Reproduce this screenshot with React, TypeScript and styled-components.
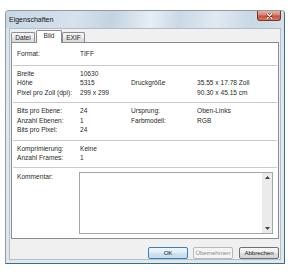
import React from "react"
import styled, { createGlobalStyle } from "styled-components"

const GlobalStyle = createGlobalStyle`
	html, body {
		margin: 0;
		padding: 0;
		background: #ffffff;
	}
	body {
		width: 300px;
		height: 274px;
		overflow: hidden;
		font-family: "Liberation Sans", Arial, sans-serif;
		color: #2a2a2a;
	}
`

const Page = styled.div`
	padding: 10px 0 0 5px;
`

const Window = styled.div`
	box-sizing: border-box;
	width: 280px;
	height: 254px;
	border: 1px solid #8d9ba6;
	border-right-color: #3e6f88;
	border-bottom-color: #3e6f88;
	border-radius: 4px 4px 0 0;
	background: linear-gradient(180deg, #d6e2eb 0%, #e2eaf0 40%, #dfe7ed 100%);
	display: flex;
	flex-direction: column;
`

const TitleBar = styled.div`
	height: 17px;
	display: flex;
	justify-content: space-between;
	align-items: center;
	padding-left: 3px;
	background: linear-gradient(
		100deg,
		#c7d7e4 0%,
		#d6e2ec 25%,
		#c3d3e0 38%,
		#e6eef4 52%,
		#cad9e5 62%,
		#e0e9f0 75%,
		#c9d8e4 88%,
		#d5e1ea 100%
	);
	border-radius: 3px 3px 0 0;
`

const Title = styled.span`
	font-size: 7px;
	color: #111;
`

const CloseButton = styled.div`
	align-self: flex-start;
	width: 24px;
	height: 10px;
	margin-right: 3px;
	box-sizing: border-box;
	border: 1px solid #7a3428;
	border-top: none;
	border-radius: 0 0 3px 3px;
	background: linear-gradient(180deg, #eab0a2 0%, #dc8170 45%, #c94d3a 55%, #d77a5e 100%);
	display: flex;
	align-items: center;
	justify-content: center;
`

const Client = styled.div`
	flex: 1;
	margin: 0 3px 3px;
	border: 1px solid #b3bec6;
	background: #f0f0f0;
	padding: 1px 1px 0;
	display: flex;
	flex-direction: column;
`

const TabStrip = styled.div`
	height: 13px;
	margin-bottom: -1px;
	display: flex;
	align-items: flex-end;
	position: relative;
	z-index: 1;
`

const Tab = styled.div<{ $active?: boolean; $width: number; $gap?: number }>`
	box-sizing: border-box;
	width: ${(p) => p.$width}px;
	height: ${(p) => (p.$active ? 13 : 10)}px;
	margin-bottom: ${(p) => (p.$active ? 0 : 1)}px;
	margin-left: ${(p) => p.$gap ?? 0}px;
	border: 1px solid #898c95;
	border-bottom: none;
	border-radius: 2px 2px 0 0;
	background: ${(p) =>
		p.$active
			? "#ffffff"
			: "linear-gradient(180deg, #f4f4f4 0%, #ececec 50%, #e2e2e2 51%, #dadada 100%)"};
	font-size: 6.6px;
	line-height: 9px;
	text-align: center;
`

const Panel = styled.div`
	box-sizing: border-box;
	height: 197px;
	border: 1px solid #898c95;
	background: #ffffff;
	display: flex;
	flex-direction: column;
`

const Section = styled.div<{ $pt: number; $pb: number }>`
	margin: 0 1px;
	padding: ${(p) => p.$pt}px 0 ${(p) => p.$pb}px 4px;
	border-bottom: 1px solid #cacaca;
	display: grid;
	grid-template-columns: 63px 51px 66px 1fr;
	grid-auto-rows: 9.5px;
	font-size: 6.6px;
	line-height: 9.5px;
	white-space: nowrap;
`

const CommentSection = styled.div`
	flex: 1;
	margin: 0 1px;
	padding: 4.5px 4px 0 4px;
	display: flex;
	font-size: 6.6px;
	line-height: 9.5px;
`

const CommentLabel = styled.div`
	width: 62px;
`

const TextBox = styled.div`
	box-sizing: border-box;
	width: 194px;
	height: 62px;
	border: 1px solid #a4a6ab;
	background: #ffffff;
	display: flex;
	justify-content: flex-end;
`

const ScrollBar = styled.div`
	width: 10px;
	background: #ebebeb;
	display: flex;
	flex-direction: column;
	justify-content: space-between;
	align-items: center;
	padding: 3px 0;
`

const Arrow = ({ down }: { down?: boolean }) => (
	<svg width="5" height="3" viewBox="0 0 5 3">
		<path d={down ? "M0 0 L5 0 L2.5 3 Z" : "M0 3 L5 3 L2.5 0 Z"} fill="#404040" />
	</svg>
)

const ButtonRow = styled.div`
	margin-top: 8px;
	display: flex;
	justify-content: flex-end;
`

const Button = styled.div<{ $kind?: "default" | "disabled"; $gap?: number }>`
	box-sizing: border-box;
	width: 40px;
	height: 12px;
	margin-left: ${(p) => p.$gap ?? 0}px;
	border: 1px solid
		${(p) =>
			p.$kind === "default" ? "#3c7fb1" : p.$kind === "disabled" ? "#b5b9bc" : "#707070"};
	border-radius: 2px;
	background: ${(p) =>
		p.$kind === "default"
			? "linear-gradient(180deg, #eef6fb 0%, #e0eef7 45%, #cfe4f2 50%, #c3dcee 100%)"
			: p.$kind === "disabled"
				? "#f4f4f4"
				: "linear-gradient(180deg, #f6f6f6 0%, #ededed 45%, #dedede 50%, #d3d3d3 100%)"};
	color: ${(p) => (p.$kind === "disabled" ? "#8c8c8c" : "#1c1c1c")};
	font-size: 6.2px;
	letter-spacing: -0.1px;
	line-height: 10px;
	text-align: center;
	white-space: nowrap;
	overflow: hidden;
`

type Row = [string, string, string?, string?]

const sections: { pt: number; pb: number; rows: Row[] }[] = [
	{ pt: 6, pb: 6, rows: [["Format:", "TIFF"]] },
	{
		pt: 3,
		pb: 5,
		rows: [
			["Breite", "10630"],
			["Höhe", "5315", "Druckgröße", "35.55 x 17.78 Zoll"],
			["Pixel pro Zoll (dpi):", "299 x 299", "", "90.30 x 45.15 cm"],
		],
	},
	{
		pt: 3,
		pb: 5,
		rows: [
			["Bits pro Ebene:", "24", "Ursprung:", "Oben-Links"],
			["Anzahl Ebenen:", "1", "Farbmodell:", "RGB"],
			["Bits pro Pixel:", "24"],
		],
	},
	{
		pt: 3,
		pb: 4,
		rows: [
			["Komprimierung:", "Keine"],
			["Anzahl Frames:", "1"],
		],
	},
]

export default function App() {
	return (
		<>
			<GlobalStyle />
			<Page>
				<Window>
					<TitleBar>
						<Title>Eigenschaften</Title>
						<CloseButton>
							<svg width="7" height="6" viewBox="0 0 7 6">
								<path
									d="M1 0.5 L6 5.5 M6 0.5 L1 5.5"
									stroke="#5a1f16"
									strokeWidth="2.2"
									strokeLinecap="round"
								/>
								<path
									d="M1 0.5 L6 5.5 M6 0.5 L1 5.5"
									stroke="#ffffff"
									strokeWidth="1.2"
									strokeLinecap="round"
								/>
							</svg>
						</CloseButton>
					</TitleBar>
					<Client>
						<TabStrip>
							<Tab $width={24}>Datei</Tab>
							<Tab $width={26} $gap={1} $active>
								Bild
							</Tab>
							<Tab $width={23}>EXIF</Tab>
						</TabStrip>
						<Panel>
							{sections.map((s, i) => (
								<Section key={i} $pt={s.pt} $pb={s.pb}>
									{s.rows.map((r, j) => (
										<React.Fragment key={j}>
											<span>{r[0]}</span>
											<span>{r[1]}</span>
											<span>{r[2] ?? ""}</span>
											<span>{r[3] ?? ""}</span>
										</React.Fragment>
									))}
								</Section>
							))}
							<CommentSection>
								<CommentLabel>Kommentar:</CommentLabel>
								<TextBox>
									<ScrollBar>
										<Arrow />
										<Arrow down />
									</ScrollBar>
								</TextBox>
							</CommentSection>
						</Panel>
						<ButtonRow>
							<Button $kind="default">OK</Button>
							<Button $kind="disabled" $gap={5}>
								Übernehmen
							</Button>
							<Button $gap={6}>Abbrechen</Button>
						</ButtonRow>
					</Client>
				</Window>
			</Page>
		</>
	)
}
